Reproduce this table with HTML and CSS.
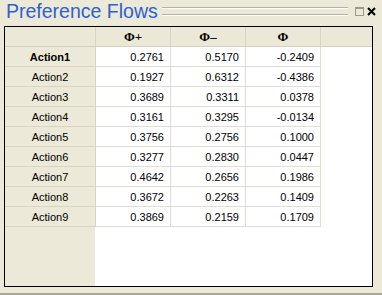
FILE: index.html
```html
<!DOCTYPE html>
<html>
<head>
    <meta charset="utf-8">
    <title>Preference Flows</title>
    <link rel="stylesheet" href="styles.css">
</head>
<body>
    <div class="window">
        <div class="titlebar">
            <span class="title">Preference Flows</span>
            <span class="rule"></span>
            <span class="win-btn">
                <svg width="9" height="9" viewBox="0 0 9 9"><rect x="0.5" y="0.5" width="8" height="8" fill="none" stroke="#9c9a8c"/><rect x="1" y="1" width="7" height="1" fill="#9c9a8c"/></svg>
            </span>
            <span class="win-btn">
                <svg width="9" height="9" viewBox="0 0 9 9"><path d="M1 1 L8 8 M8 1 L1 8" stroke="#000" stroke-width="2"/></svg>
            </span>
        </div>

        <div class="pane">
            <table class="flows">
                <thead>
                    <tr>
                        <th class="corner"></th>
                        <th>&Phi;+</th>
                        <th>&Phi;&ndash;</th>
                        <th>&Phi;</th>
                        <th class="filler"></th>
                    </tr>
                </thead>
                <tbody>
                    <tr class="selected"><th>Action1</th><td>0.2761</td><td>0.5170</td><td>-0.2409</td><td class="filler"></td></tr>
                    <tr><th>Action2</th><td>0.1927</td><td>0.6312</td><td>-0.4386</td><td class="filler"></td></tr>
                    <tr><th>Action3</th><td>0.3689</td><td>0.3311</td><td>0.0378</td><td class="filler"></td></tr>
                    <tr><th>Action4</th><td>0.3161</td><td>0.3295</td><td>-0.0134</td><td class="filler"></td></tr>
                    <tr><th>Action5</th><td>0.3756</td><td>0.2756</td><td>0.1000</td><td class="filler"></td></tr>
                    <tr><th>Action6</th><td>0.3277</td><td>0.2830</td><td>0.0447</td><td class="filler"></td></tr>
                    <tr><th>Action7</th><td>0.4642</td><td>0.2656</td><td>0.1986</td><td class="filler"></td></tr>
                    <tr><th>Action8</th><td>0.3672</td><td>0.2263</td><td>0.1409</td><td class="filler"></td></tr>
                    <tr><th>Action9</th><td>0.3869</td><td>0.2159</td><td>0.1709</td><td class="filler"></td></tr>
                </tbody>
            </table>
        </div>
    </div>
</body>
</html>
```

FILE: styles.css
```css
body {
    margin: 0;
    background-color: #ece9d8;
    font-family: "Liberation Sans", Arial, sans-serif;
    font-size: 11px;
}
.window {
    height: 295px;
    box-sizing: border-box;
    border-bottom: 2px solid #aca899;
}
.titlebar {
    display: flex;
    align-items: center;
    height: 26px;
    padding: 0 6px 0 6px;
    box-sizing: border-box;
}
.title {
    color: #2d62cb;
    font-size: 19.5px;
    line-height: 20px;
    margin-top: -5px;
    white-space: nowrap;
}
.rule {
    flex: 1;
    height: 6px;
    margin: -4px 4px 0 4px;
    border-top: 1px solid #b5b2a3;
    border-bottom: 1px solid #b5b2a3;
    box-shadow: 0 1px 0 #fff, inset 0 1px 0 #fff;
}
.win-btn {
    width: 10px;
    height: 10px;
    margin-top: -4px;
    margin-left: 2px;
    display: flex;
    align-items: center;
    justify-content: center;
}
.pane {
    margin-left: 4px;
    width: 369px;
    height: 261px;
    box-sizing: border-box;
    border: 1px solid #000;
    background: linear-gradient(to right, #ece9d8 90px, #fff 90px);
    overflow: hidden;
}
.flows {
    width: 100%;
    border-collapse: separate;
    border-spacing: 0;
    table-layout: fixed;
}
.flows th, .flows td {
    height: 19px;
    padding: 0 6px;
    border-right: 1px solid #e0ded4;
    border-bottom: 1px solid #e0ded4;
    white-space: nowrap;
    font-size: 11px;
}
.flows thead th {
    background: #ebe8d8;
    color: #000;
    font-family: "Liberation Serif", "Times New Roman", serif;
    font-size: 13px;
    font-weight: bold;
    text-align: center;
    border-right: 1px solid #d8d5c6;
    border-bottom: 1px solid #d2cfbf;
    width: 62px;
}
.flows thead th.corner {
    width: 78px;
}
.flows thead th.filler {
    width: auto;
    border-right: none;
}
.flows tbody th {
    background: #ece9d8;
    font-weight: normal;
    color: #000;
    text-align: center;
    border-right: 1px solid #d8d5c6;
    border-bottom: 1px solid #d8d5c6;
}
.flows tbody tr.selected th {
    font-weight: bold;
}
.flows td {
    text-align: right;
    color: #000;
    background: #fff;
}
.flows td.filler {
    border: none;
}
```
